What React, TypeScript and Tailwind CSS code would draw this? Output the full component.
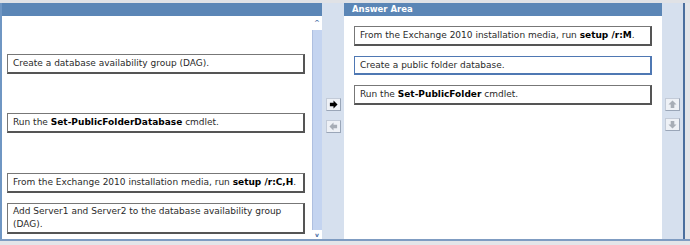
import React from "react";

type Item = { pre: string; bold?: string; post?: string };

function ItemBox({ item, active, className = "" }: { item: Item; active?: boolean; className?: string }) {
  return (
    <div
      className={`w-[298px] bg-white px-[5px] flex items-center text-[9px] leading-[13px] text-[#2a2a2a] ${
        active
          ? "border border-[#4f78b3] border-r-2 border-b-2"
          : "border border-[#777] border-r-2 border-b-2 border-r-[#555] border-b-[#555]"
      } ${className}`}
    >
      <span>
        {item.pre}
        {item.bold && <b className="font-bold text-black">{item.bold}</b>}
        {item.post}
      </span>
    </div>
  );
}

function ArrowButton({ dir, dark }: { dir: "left" | "right" | "up" | "down"; dark?: boolean }) {
  const rot = { right: 0, left: 180, up: 270, down: 90 }[dir];
  return (
    <div className="w-[15px] h-[13px] bg-[#eef1f6] border border-[#c3cbd8] border-r-[#9aa6b8] border-b-[#9aa6b8] flex items-center justify-center">
      <svg width="9" height="9" viewBox="0 0 10 10" style={{ transform: `rotate(${rot}deg)` }}>
        <path d="M1 3h4V0.5L9.5 5 5 9.5V7H1z" fill={dark ? "#000" : "#a7adb6"} />
      </svg>
    </div>
  );
}

export default function App() {
  const left: { item: Item; mt: string; h: string }[] = [
    { item: { pre: "Create a database availability group (DAG)." }, mt: "mt-[38px]", h: "h-[20px]" },
    { item: { pre: "Run the ", bold: "Set-PublicFolderDatabase", post: " cmdlet." }, mt: "mt-[39px]", h: "h-[20px]" },
    {
      item: { pre: "From the Exchange 2010 installation media, run ", bold: "setup /r:C,H", post: "." },
      mt: "mt-[40px]",
      h: "h-[20px]",
    },
    {
      item: { pre: "Add Server1 and Server2 to the database availability group (DAG)." },
      mt: "mt-[10px]",
      h: "h-[31px]",
    },
  ];

  return (
    <div
      className="w-[690px] h-[245px] bg-[#e3e5e9] overflow-hidden"
      style={{ fontFamily: '"DejaVu Sans", Verdana, sans-serif' }}
    >
      <div className="h-[3px] bg-[#e0e2e6]" />
      <div className="flex h-[236px]">
        {/* Left list */}
        <div className="w-[2px] bg-[#6f96c3]" />
        <div className="w-[320px] flex flex-col">
          <div className="h-[13px] bg-[#5b86b6]" />
          <div className="flex flex-1">
            <div className="w-[310px] bg-white flex flex-col pl-[5px]">
              {left.map((l, i) => (
                <ItemBox key={i} item={l.item} className={`${l.mt} ${l.h}`} />
              ))}
            </div>
            <div className="w-[10px] bg-white flex flex-col">
              <div className="h-[14px] flex items-center justify-center text-[7px] text-[#4a6fa5] font-bold">^</div>
              <div className="flex-1 bg-[#c4d4f0] border-l border-[#aebfe0]" />
              <div className="h-[9px] flex items-center justify-center text-[6px] text-[#4a6fa5] font-bold">v</div>
            </div>
          </div>
        </div>

        {/* Middle buttons */}
        <div className="w-[22px] bg-[#d6e0ee] flex flex-col items-center pt-[95px] gap-[9px]">
          <ArrowButton dir="right" dark />
          <ArrowButton dir="left" />
        </div>

        {/* Answer area */}
        <div className="w-[318px] flex flex-col">
          <div className="h-[13px] bg-[#5b86b6] text-white font-bold text-[8.5px] leading-[13px] pl-[8px]">
            Answer Area
          </div>
          <div className="flex-1 bg-white flex flex-col pl-[10px] pt-[10px] gap-[10px]">
            <ItemBox
              item={{ pre: "From the Exchange 2010 installation media, run ", bold: "setup /r:M", post: "." }}
              className="h-[20px]"
            />
            <ItemBox item={{ pre: "Create a public folder database." }} active className="h-[19px]" />
            <ItemBox item={{ pre: "Run the ", bold: "Set-PublicFolder", post: " cmdlet." }} className="h-[20px]" />
          </div>
        </div>

        {/* Right buttons */}
        <div className="w-[21px] bg-[#d6e0ee] flex flex-col items-center pt-[95px] gap-[7px]">
          <ArrowButton dir="up" />
          <ArrowButton dir="down" />
        </div>
        <div className="w-[2px] bg-[#4b6f9e]" />
      </div>
      <div className="h-[2px] bg-[#7f9cc2]" />
    </div>
  );
}
